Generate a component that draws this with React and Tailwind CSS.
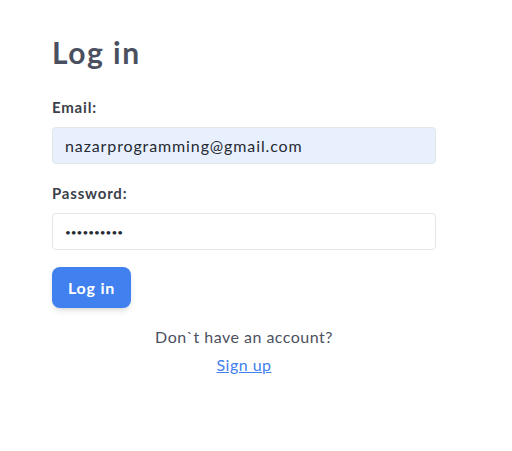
import React from 'react';

export default function App() {
  return (
    <div className="min-h-screen bg-white font-['Lato','Noto_Sans',sans-serif] tracking-[0.05em]">
      <div className="ml-[52px] w-[384px] pt-[34px]">
        {/* Title */}
        <h1 className="text-[30px] leading-[36px] font-bold tracking-[0.05em] text-[#4b5060]">Log in</h1>

        <form className="mt-[27px] flex flex-col">
          <label className="text-[15px] leading-[20px] font-bold text-[#3b3f4a]">Email:</label>
          <input
            type="email"
            defaultValue="nazarprogramming@gmail.com"
            className="mt-[10px] h-[37px] w-full rounded border border-[#e2e5ea] bg-[#e8f0fe] px-3 text-[16px] tracking-[0.055em] text-[#262a33] outline-none"
          />

          <label className="mt-[19px] text-[15px] leading-[20px] font-bold text-[#3b3f4a]">Password:</label>
          <input
            type="password"
            defaultValue="1234567890"
            className="mt-[10px] h-[37px] w-full rounded border border-[#e2e5ea] bg-white px-3 text-[10px] tracking-normal text-[#262a33] outline-none"
          />

          <div className="mt-[17px]">
            <button
              type="button"
              className="h-[41px] w-[79px] rounded-lg bg-[#4180ef] text-[16px] font-bold text-white shadow-md"
            >
              Log in
            </button>
          </div>
        </form>

        <div className="mt-[15px] flex flex-col items-center text-[16px] leading-[28px] tracking-[0.03em]">
          <span className="text-[#4b5060]">Don`t have an account?</span>
          <a href="#" className="text-[#4180ef] underline">Sign up</a>
        </div>
      </div>
    </div>
  );
}
